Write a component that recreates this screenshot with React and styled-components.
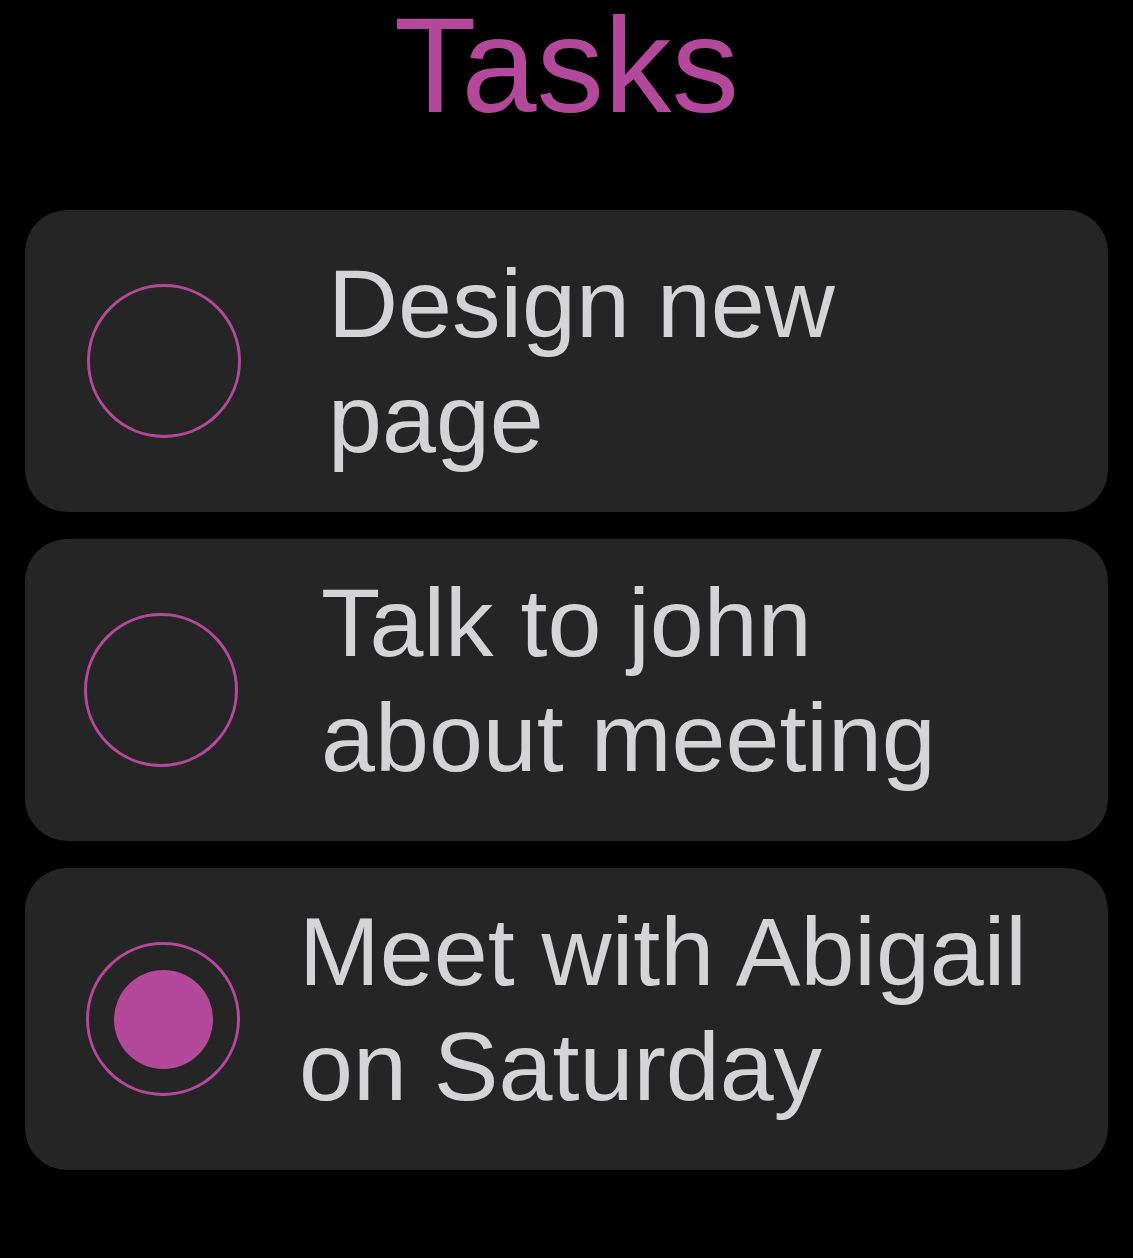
import React from "react";
import styled, { createGlobalStyle } from "styled-components";

const GlobalStyle = createGlobalStyle`
  html, body {
    margin: 0;
    padding: 0;
    background: #000;
  }

  body {
    font-family: "Liberation Sans", Arial, sans-serif;
  }
`;

const Screen = styled.div`
  width: 1133px;
  min-height: 1258px;
  background: #000;
  display: flex;
  flex-direction: column;
`;

const Title = styled.h1`
  margin: 0;
  height: 132px;
  font-size: 135px;
  line-height: 132px;
  font-weight: 400;
  text-align: center;
  color: #b4489a;
`;

const TaskList = styled.div`
  margin-top: 78px;
  padding: 0 25px;
  display: flex;
  flex-direction: column;
  gap: 27px;
`;

const TaskCard = styled.div`
  height: 302px;
  display: flex;
  align-items: center;
  padding-left: ${props => props.$inset}px;
  background: #252525;
  border-radius: 42px;
`;

const Radio = styled.div`
  flex: 0 0 auto;
  width: 154px;
  height: 154px;
  box-sizing: border-box;
  border: 3.5px solid #b4489a;
  border-radius: 50%;
  display: flex;
  align-items: center;
  justify-content: center;

  &::after {
    content: "";
    display: ${props => (props.$checked ? "block" : "none")};
    width: 99px;
    height: 99px;
    border-radius: 50%;
    background: #b4489a;
  }
`;

const Label = styled.div`
  margin-left: ${props => props.$gap}px;
  padding-bottom: ${props => props.$lift}px;
  max-width: 745px;
  font-size: 97px;
  line-height: 115px;
  color: #d4d4d6;
`;

const tasks = [
  { id: 1, text: "Design new page", done: false, inset: 62, gap: 87, lift: 0 },
  { id: 2, text: "Talk to john about meeting", done: false, inset: 59, gap: 83, lift: 20 },
  { id: 3, text: "Meet with Abigail on Saturday", done: true, inset: 61, gap: 59, lift: 20 }
];

export default function App() {
  return (
    <Screen>
      <GlobalStyle />
      <Title>Tasks</Title>
      <TaskList>
        {tasks.map(task => (
          <TaskCard key={task.id} $inset={task.inset}>
            <Radio $checked={task.done} />
            <Label $gap={task.gap} $lift={task.lift}>
              {task.text}
            </Label>
          </TaskCard>
        ))}
      </TaskList>
    </Screen>
  );
}
